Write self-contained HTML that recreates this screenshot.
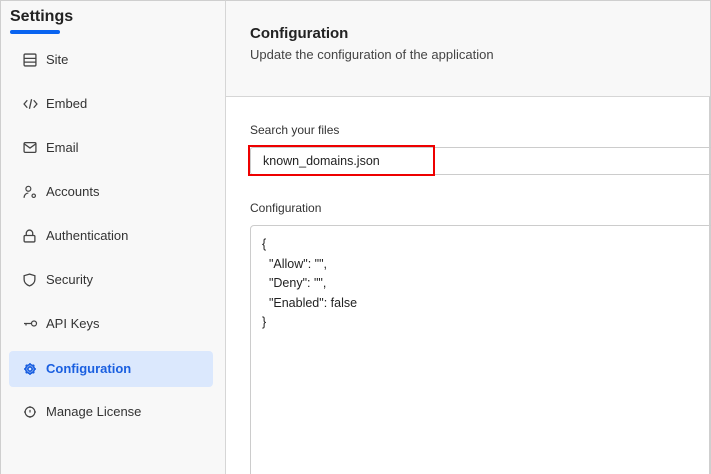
<!DOCTYPE html>
<html><head><style>
*{margin:0;padding:0;box-sizing:border-box}
html,body{width:711px;height:474px;overflow:hidden}
body{background:#fff;font-family:"Liberation Sans",sans-serif;color:#333;position:relative}
.frame{position:absolute;left:0;top:0;width:711px;height:474px;border:1px solid #cfcfcf;border-bottom:none}
.side{position:absolute;left:0;top:0;width:226px;height:474px;background:#f8f8f8;border-right:1px solid #d6d6d6;border-left:1px solid #cfcfcf;border-top:1px solid #cfcfcf}
.title{position:absolute;left:9px;top:7px;font-size:16px;font-weight:bold;color:#222}
.ul{position:absolute;left:9px;top:29px;width:50px;height:4px;border-radius:2px;background:#0a64f0}
.item{position:absolute;left:9px;width:204px;height:36px;border-radius:4px;font-size:13px;color:#333;line-height:36px;padding-left:37px}
.item svg{position:absolute;left:14px;top:11px}
.item.act{background:#dbe8fd;color:#1a5fe0;font-weight:bold}
.head{position:absolute;left:226px;top:1px;width:484px;height:96px;background:#f8f8f8;border-bottom:1px solid #d6d6d6}
.h1{position:absolute;left:250px;top:25px;font-size:15px;font-weight:bold;color:#222}
.h2{position:absolute;left:250px;top:47px;font-size:13px;color:#444}
.lbl{position:absolute;left:250px;font-size:12px;color:#333}
.inp{position:absolute;left:250px;top:147px;width:470px;height:28px;border:1px solid #ccc;border-radius:3px;font-size:12.5px;line-height:26px;padding-left:12px;color:#222}
.red{position:absolute;left:248px;top:145px;width:187px;height:31px;border:2px solid #e00}
.ta{position:absolute;left:250px;top:225px;width:470px;height:260px;border:1px solid #ccc;border-radius:4px;font-size:12.5px;color:#222;padding:9px 0 0 11px;line-height:19.5px}
.rb{position:absolute;left:709px;top:97px;width:1px;height:377px;background:#cfcfcf}
</style></head><body>
<div class="frame"></div>
<div class="side">
<div class="title">Settings</div><div class="ul"></div>
</div>
<div class="item" style="top:42px"><svg width="14" height="14" viewBox="0 0 13 13" fill="none" stroke="#444" stroke-width="1.2"><rect x="1" y="1" width="11" height="11" rx="1"/><path d="M1 5h11M1 8.5h11"/></svg>Site</div>
<div class="item" style="top:86px"><svg width="15" height="14" viewBox="0 0 14 13" fill="none" stroke="#444" stroke-width="1.2"><path d="M4 3L1 6.5 4 10M10 3l3 3.5-3 3.5M8 2L6 11"/></svg>Embed</div>
<div class="item" style="top:130px"><svg width="14" height="13" viewBox="0 0 13 12" fill="none" stroke="#444" stroke-width="1.2"><rect x="1" y="1.5" width="11" height="9" rx="1"/><path d="M1 2.5l5.5 4 5.5-4"/></svg>Email</div>
<div class="item" style="top:174px"><svg width="15" height="14" viewBox="0 0 14 13" fill="none" stroke="#444" stroke-width="1.1"><circle cx="5" cy="3.5" r="2.3"/><path d="M1 12c0-3 2-4.5 4-4.5"/><circle cx="10" cy="10" r="1.6"/></svg>Accounts</div>
<div class="item" style="top:218px"><svg width="13" height="14" viewBox="0 0 12 13" fill="none" stroke="#444" stroke-width="1.2"><rect x="1" y="6" width="10" height="6" rx="1"/><path d="M3 6V4a3 3 0 016 0v2"/></svg>Authentication</div>
<div class="item" style="top:262px"><svg width="13" height="14" viewBox="0 0 12 13" fill="none" stroke="#444" stroke-width="1.2"><path d="M6 1L1 2.5V6c0 3 2.5 5 5 6 2.5-1 5-3 5-6V2.5z"/></svg>Security</div>
<div class="item" style="top:306px"><svg width="15" height="13" viewBox="0 0 15 13" fill="none" stroke="#444" stroke-width="1.2"><circle cx="11" cy="6.5" r="2.5"/><path d="M1 6.5h7.5M3 6.5v2"/></svg>API Keys</div>
<div class="item act" style="top:351px"><svg width="14" height="14" viewBox="0 0 13 13" fill="none" stroke="#1a5fe0" stroke-width="1.6"><circle cx="6.5" cy="6.5" r="2"/><path d="M6.5 1v1.5M6.5 10.5V12M1 6.5h1.5M10.5 6.5H12M2.6 2.6l1 1M9.4 9.4l1 1M2.6 10.4l1-1M9.4 3.6l1-1"/><circle cx="6.5" cy="6.5" r="4"/></svg>Configuration</div>
<div class="item" style="top:394px"><svg width="14" height="14" viewBox="0 0 13 13" fill="none" stroke="#444" stroke-width="1.1"><circle cx="6.5" cy="6.5" r="4.5"/><path d="M6.5 1v1.5M6.5 10.5V12M1 6.5h1.5M10.5 6.5H12M6.5 4.5v2.5"/></svg>Manage License</div>
<div class="head"></div>
<div class="h1">Configuration</div>
<div class="h2">Update the configuration of the application</div>
<div class="lbl" style="top:123px">Search your files</div>
<div class="inp">known_domains.json</div>
<div class="red"></div>
<div class="lbl" style="top:201px">Configuration</div>
<div class="ta">{<br>&nbsp;&nbsp;"Allow": "",<br>&nbsp;&nbsp;"Deny": "",<br>&nbsp;&nbsp;"Enabled": false<br>}</div>
<div class="rb"></div>
</body></html>
